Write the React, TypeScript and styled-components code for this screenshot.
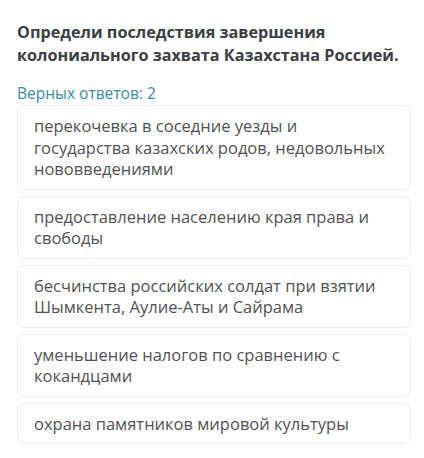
import styled, { createGlobalStyle } from "styled-components";

const GlobalStyle = createGlobalStyle`
  body {
    margin: 0;
    background: #ffffff;
    font-family: "Open Sans", "Noto Sans", sans-serif;
  }
`;

const Wrapper = styled.div`
  display: flex;
  flex-direction: column;
  padding: 21px 13px 0 17px;
`;

const Title = styled.h1`
  margin: 0;
  font-size: 16.2px;
  line-height: 23px;
  font-weight: 700;
  color: #3b3e43;
`;

const Counter = styled.div`
  margin-top: 16px;
  font-size: 15.5px;
  line-height: 20px;
  color: #3b8c9c;
`;

const List = styled.div`
  margin-top: 2px;
  display: flex;
  flex-direction: column;
  gap: 6px;
`;

const Option = styled.div`
  padding: 9px 16px 9px 16px;
  border: 1px solid #ececec;
  border-radius: 7px;
  font-size: 16.5px;
  line-height: 21.5px;
  color: #525252;
`;

const answers = [
  "перекочевка в соседние уезды и государства казахских родов, недовольных нововведениями",
  "предоставление населению края права и свободы",
  "бесчинства российских солдат при взятии Шымкента, Аулие-Аты и Сайрама",
  "уменьшение налогов по сравнению с кокандцами",
  "охрана памятников мировой культуры",
];

export default function App() {
  return (
    <>
      <GlobalStyle />
      <Wrapper>
        <Title>
          Определи последствия завершения колониального захвата Казахстана
          Россией.
        </Title>
        <Counter>Верных ответов: 2</Counter>
        <List>
          {answers.map((a) => (
            <Option key={a}>{a}</Option>
          ))}
        </List>
      </Wrapper>
    </>
  );
}
